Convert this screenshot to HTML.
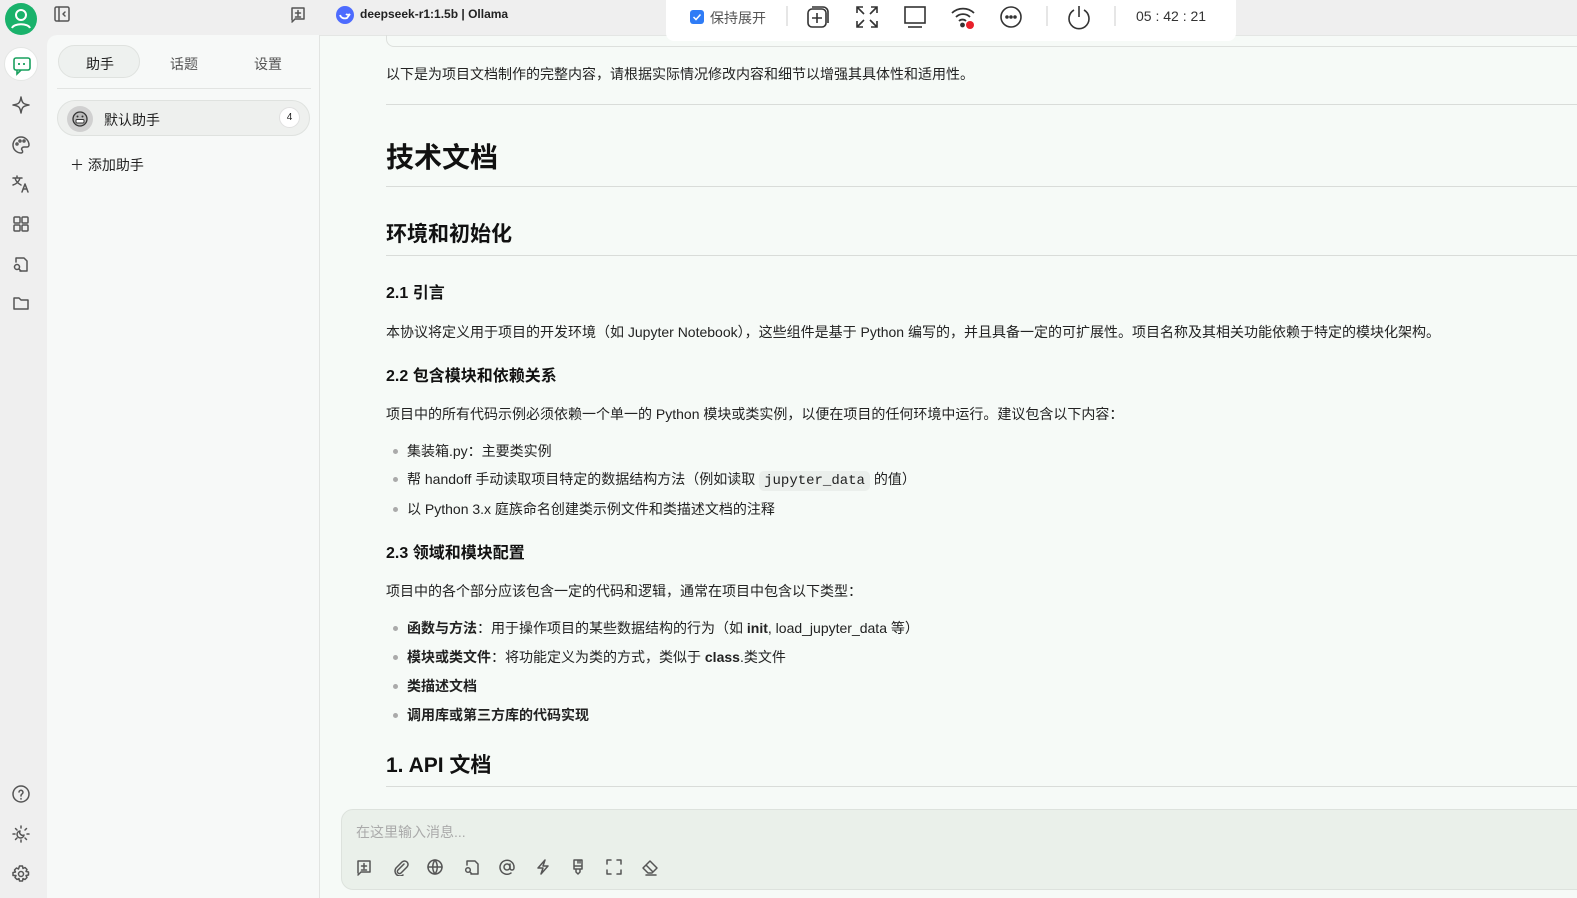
<!DOCTYPE html>
<html><head><meta charset="utf-8">
<style>
*{margin:0;padding:0;box-sizing:border-box}
body{width:1577px;height:898px;overflow:hidden;background:#efefef;font-family:"Liberation Sans","Noto Sans CJK SC",sans-serif;color:#222;position:relative}
.abs{position:absolute}
svg{display:block}
.ic{stroke:#555;fill:none;stroke-width:1.5;stroke-linecap:round;stroke-linejoin:round}
.main{position:absolute;left:47px;top:35px;width:1530px;height:863px;background:#f6faf7;border-top-left-radius:10px;border-left:1px solid #e4e6e4;border-top:1px solid #e4e6e4}
.panel{position:absolute;left:47px;top:35px;width:273px;height:863px;border-right:1px solid #e2e4e2;background:#f7f9f8;border-top-left-radius:10px}
.t{position:absolute;font-size:14px;color:#222;white-space:nowrap}
.hr{position:absolute;left:386px;right:0;height:1px;background:#d9dcd9}
.li::before{content:"";position:absolute;left:-14px;top:8px;width:5px;height:5px;border-radius:50%;background:#aaa}
code{font-family:"Liberation Mono",monospace;background:#ebefec;border-radius:5px;padding:2px 5px;font-size:14px}
b{font-weight:700}
</style></head><body>
<div class="main"></div>
<div class="panel"></div>

<!-- left icon bar -->
<div class="abs" style="left:5px;top:3px;width:32px;height:32px;border-radius:50%;background:#19b26b">
<svg width="32" height="32"><circle cx="16" cy="12" r="5" stroke="#fff" stroke-width="2" fill="none"/><path d="M7 25c2-5 16-5 18 0" stroke="#fff" stroke-width="2" fill="none"/></svg></div>
<div class="abs" style="left:4px;top:47px;width:34px;height:34px;border-radius:50%;background:#fff;border:1px solid #e4e6e4">
<svg width="34" height="34"><rect x="9" y="10" width="16" height="12" rx="2" stroke="#19a05e" stroke-width="1.6" fill="none"/><path d="M12 22v4l4-4" stroke="#19a05e" stroke-width="1.6" fill="none"/><path d="M14 15v2M19 15v2" stroke="#19a05e" stroke-width="1.8"/></svg></div>
<svg class="abs ic" style="left:11px;top:95px" width="20" height="20"><path d="M10 2C11 8 12 9 18 10C12 11 11 12 10 18C9 12 8 11 2 10C8 9 9 8 10 2Z"/></svg>
<svg class="abs ic" style="left:11px;top:135px" width="20" height="20"><path d="M10 2a8 8 0 1 0 0 16c2 0 2-2 1-3s0-3 2-3h3a2 2 0 0 0 2-2 8 8 0 0 0-8-8z"/><circle cx="6" cy="9" r="1"/><circle cx="9" cy="6" r="1"/><circle cx="13" cy="6" r="1"/></svg>
<svg class="abs ic" style="left:11px;top:174px" width="20" height="20"><path d="M2 4h9M6 2v2M4 4c1 4 4 6 6 7M9 4c-1 4-4 6-7 7M11 18l3-8 3 8M12 15h4"/></svg>
<svg class="abs ic" style="left:11px;top:214px" width="20" height="20"><rect x="3" y="3" width="6" height="6" rx="1"/><rect x="11" y="3" width="6" height="6" rx="1"/><rect x="3" y="11" width="6" height="6" rx="1"/><rect x="11" y="11" width="6" height="6" rx="1"/></svg>
<svg class="abs ic" style="left:11px;top:254px" width="20" height="20"><path d="M5 8V4h8l3 3v10H9"/><circle cx="6" cy="13" r="2.5"/><path d="M8 15l2 2"/></svg>
<svg class="abs ic" style="left:11px;top:293px" width="20" height="20"><path d="M3 5h5l2 2h7v9H3z"/></svg>
<svg class="abs ic" style="left:11px;top:784px" width="20" height="20"><circle cx="10" cy="10" r="8"/><path d="M8 8a2 2 0 1 1 3 2c-1 .5-1 1-1 2M10 14.5v.5"/></svg>
<svg class="abs ic" style="left:11px;top:824px" width="20" height="20"><path d="M10 2v2M10 16v2M2 10h2M16 10h2M4.5 4.5l1.5 1.5M14 14l1.5 1.5M4.5 15.5L6 14M14 6l1.5-1.5"/><path d="M13 11a3.5 3.5 0 1 1-4-4 3 3 0 0 0 4 4z"/></svg>
<svg class="abs ic" style="left:11px;top:864px" width="20" height="20"><circle cx="10" cy="10" r="2.5"/><path d="M8.5 2h3l.5 2.5 2-1 2 2-1 2 2.5.5v3l-2.5.5 1 2-2 2-2-1-.5 2.5h-3l-.5-2.5-2 1-2-2 1-2L2 11.5v-3l2.5-.5-1-2 2-2 2 1z"/></svg>

<!-- top bar -->
<svg class="abs ic" style="left:53px;top:5px" width="18" height="18"><rect x="2" y="2" width="14" height="14" rx="1.5"/><path d="M6 2v14M12 7l-2 2 2 2"/></svg>
<svg class="abs ic" style="left:289px;top:5px" width="18" height="18"><path d="M3 15V3h12v11H6l-3 3"/><path d="M9 5.5v5M6.5 8h5M6.5 12h5"/></svg>
<div class="abs" style="left:336px;top:6px;width:18px;height:18px;border-radius:50%;background:#4d6bfe"><svg width="18" height="18"><path d="M4 9c1 3 4 4 7 3l3-4c-1 1-3 1-4 0" stroke="#fff" stroke-width="1.8" fill="none"/></svg></div>
<div class="t" style="left:360px;top:7px;font-size:12px;font-weight:600;color:#222">deepseek-r1:1.5b | Ollama</div>

<!-- floating toolbar -->
<div class="abs" style="left:666px;top:0;width:570px;height:41px;background:#fff;border-radius:0 0 8px 8px"></div>
<div class="abs" style="left:690px;top:10px;width:14px;height:14px;border-radius:3px;background:#2f7cf6"><svg width="14" height="14"><path d="M3.5 7l2.5 2.5L10.5 4.5" stroke="#fff" stroke-width="1.5" fill="none"/></svg></div>
<div class="t" style="left:710px;top:8px;color:#555;font-size:14px">保持展开</div>
<div class="abs" style="left:786px;top:6px;width:2px;height:20px;background:#e6e6e6"></div>
<svg class="abs" style="left:805px;top:4px" width="28" height="26" fill="none" stroke="#333" stroke-width="1.6"><rect x="3" y="5" width="18" height="18" rx="4"/><path d="M7 3h11a5 5 0 0 1 5 5v11"/><path d="M12 9v10M7 14h10"/></svg>
<svg class="abs" style="left:854px;top:4px" width="26" height="26" fill="none" stroke="#333" stroke-width="1.6"><path d="M3 9V3h6M3 3l7 7M23 9V3h-6M23 3l-7 7M3 17v6h6M3 23l7-7M23 17v6h-6M23 23l-7-7"/></svg>
<svg class="abs" style="left:902px;top:4px" width="26" height="26" fill="none" stroke="#333" stroke-width="1.6"><rect x="3" y="3" width="20" height="16"/><path d="M6 23h14"/></svg>
<svg class="abs" style="left:950px;top:4px" width="28" height="26" fill="none" stroke="#333" stroke-width="1.8"><path d="M2 9a16 16 0 0 1 22 0M6 13a10 10 0 0 1 14 0M9 17a5 5 0 0 1 7 0"/><circle cx="12.5" cy="21" r="1.5" fill="#333"/><circle cx="20" cy="21" r="4" fill="#e8202a" stroke="none"/></svg>
<svg class="abs" style="left:998px;top:4px" width="26" height="26" fill="none" stroke="#333" stroke-width="1.6"><circle cx="13" cy="13" r="10"/><circle cx="9" cy="13" r="1" fill="#333"/><circle cx="13" cy="13" r="1" fill="#333"/><circle cx="17" cy="13" r="1" fill="#333"/></svg>
<div class="abs" style="left:1046px;top:6px;width:2px;height:20px;background:#e6e6e6"></div>
<svg class="abs" style="left:1066px;top:4px" width="26" height="26" fill="none" stroke="#333" stroke-width="1.6"><path d="M8 6a10 10 0 1 0 10 0"/><path d="M13 2v11"/></svg>
<div class="abs" style="left:1114px;top:6px;width:2px;height:20px;background:#e6e6e6"></div>
<div class="t" style="left:1136px;top:8px;color:#333">05 : 42 : 21</div>

<!-- panel content -->
<div class="abs" style="left:58px;top:45px;width:82px;height:33px;border-radius:17px;background:#eef1ef;border:1px solid #dfe2df"></div>
<div class="t" style="left:86px;top:54px">助手</div>
<div class="t" style="left:170px;top:54px;color:#555">话题</div>
<div class="t" style="left:254px;top:54px;color:#555">设置</div>
<div class="abs" style="left:57px;top:88px;width:254px;height:1px;background:#e2e4e2"></div>
<div class="abs" style="left:57px;top:100px;width:253px;height:36px;border-radius:18px;background:#eef0ee;border:1px solid #dfe2df"></div>
<div class="abs" style="left:67px;top:106px;width:26px;height:26px;border-radius:50%;background:#d0d0d0">
<svg width="26" height="26"><circle cx="13" cy="13" r="7" fill="#bbb" stroke="#333" stroke-width="1.3"/><rect x="9" y="13.5" width="8" height="3.5" rx="1" fill="#fff" stroke="#333" stroke-width="1"/><circle cx="10.5" cy="10.5" r="1" fill="#333"/><circle cx="15.5" cy="10.5" r="1" fill="#333"/></svg></div>
<div class="t" style="left:104px;top:110px">默认助手</div>
<div class="abs" style="left:279px;top:107px;width:21px;height:21px;border-radius:50%;background:#fff;border:1px solid #e0e0e0;font-size:10px;text-align:center;line-height:19px">4</div>
<div class="t" style="left:70px;top:155px">＋ 添加助手</div>

<!-- content -->
<div class="abs" style="left:386px;top:35px;right:0;height:12px;border:1px solid #dde0dd;border-top:none;border-right:none;border-bottom-left-radius:8px"></div>
<div class="t" style="left:386px;top:64px">以下是为项目文档制作的完整内容，请根据实际情况修改内容和细节以增强其具体性和适用性。</div>
<div class="hr" style="top:104px"></div>
<div class="t" style="left:386px;top:136px;font-size:28px;font-weight:700;color:#111">技术文档</div>
<div class="hr" style="top:186px"></div>
<div class="t" style="left:386px;top:218px;font-size:21px;font-weight:700;color:#111">环境和初始化</div>
<div class="hr" style="top:255px"></div>
<div class="t" style="left:386px;top:279px;font-size:16px;font-weight:700;color:#111">2.1 引言</div>
<div class="t" style="left:386px;top:322px">本协议将定义用于项目的开发环境（如 Jupyter Notebook），这些组件是基于 Python 编写的，并且具备一定的可扩展性。项目名称及其相关功能依赖于特定的模块化架构。</div>
<div class="t" style="left:386px;top:362px;font-size:16px;font-weight:700;color:#111">2.2 包含模块和依赖关系</div>
<div class="t" style="left:386px;top:404px">项目中的所有代码示例必须依赖一个单一的 Python 模块或类实例，以便在项目的任何环境中运行。建议包含以下内容：</div>
<div class="t li" style="left:407px;top:441px">集装箱.py：主要类实例</div>
<div class="t li" style="left:407px;top:469px">帮 handoff 手动读取项目特定的数据结构方法（例如读取 <code>jupyter_data</code> 的值）</div>
<div class="t li" style="left:407px;top:499px">以 Python 3.x 庭族命名创建类示例文件和类描述文档的注释</div>
<div class="t" style="left:386px;top:539px;font-size:16px;font-weight:700;color:#111">2.3 领域和模块配置</div>
<div class="t" style="left:386px;top:581px">项目中的各个部分应该包含一定的代码和逻辑，通常在项目中包含以下类型：</div>
<div class="t li" style="left:407px;top:618px"><b>函数与方法</b>：用于操作项目的某些数据结构的行为（如 <b>init</b>, load_jupyter_data 等）</div>
<div class="t li" style="left:407px;top:647px"><b>模块或类文件</b>：将功能定义为类的方式，类似于 <b>class</b>.类文件</div>
<div class="t li" style="left:407px;top:676px"><b>类描述文档</b></div>
<div class="t li" style="left:407px;top:705px"><b>调用库或第三方库的代码实现</b></div>
<div class="t" style="left:386px;top:749px;font-size:21px;font-weight:700;color:#111">1. API 文档</div>
<div class="hr" style="top:786px"></div>

<!-- input -->
<div class="abs" style="left:341px;top:809px;width:1250px;height:81px;border-radius:12px;background:#eaf0ea;border:1px solid #dde2dd"></div>
<div class="t" style="left:356px;top:822px;color:#aaa">在这里输入消息...</div>
<svg class="abs ic" style="left:355px;top:858px" width="18" height="18"><path d="M3 15V3h12v11H6l-3 3"/><path d="M9 5.5v5M6.5 8h5M6.5 12h5"/></svg>
<svg class="abs ic" style="left:391px;top:858px" width="18" height="18"><path d="M13 6l-6 6a2 2 0 0 0 3 3l6-6a3.5 3.5 0 0 0-5-5L5 10a5 5 0 0 0 7 7"/></svg>
<svg class="abs ic" style="left:426px;top:858px" width="18" height="18"><circle cx="9" cy="9" r="7"/><path d="M2 9h14M9 2c-3 4-3 10 0 14M9 2c3 4 3 10 0 14"/></svg>
<svg class="abs ic" style="left:462px;top:858px" width="18" height="18"><path d="M5 7V3h8l3 3v10H9"/><circle cx="6" cy="12" r="2.3"/><path d="M8 14l1.5 1.5"/></svg>
<svg class="abs ic" style="left:498px;top:858px" width="18" height="18"><circle cx="9" cy="9" r="3"/><path d="M12 6v4a2 2 0 0 0 4 0V9a7 7 0 1 0-3 6"/></svg>
<svg class="abs ic" style="left:534px;top:858px" width="18" height="18"><path d="M11 2L4 10h5l-2 6 7-8H9z"/></svg>
<svg class="abs ic" style="left:569px;top:858px" width="18" height="18"><path d="M5 2h8v9H5zM5 8h8M7 11v3l2 2 2-2v-3M9 2v3M11 2v3"/></svg>
<svg class="abs ic" style="left:605px;top:858px" width="18" height="18"><path d="M2 6V2h4M12 2h4v4M16 12v4h-4M6 16H2v-4"/></svg>
<svg class="abs ic" style="left:641px;top:858px" width="18" height="18"><path d="M7 15L2 10l7-7 7 7-5 5zM5 7l7 7M5 17h10"/></svg>
</body></html>
